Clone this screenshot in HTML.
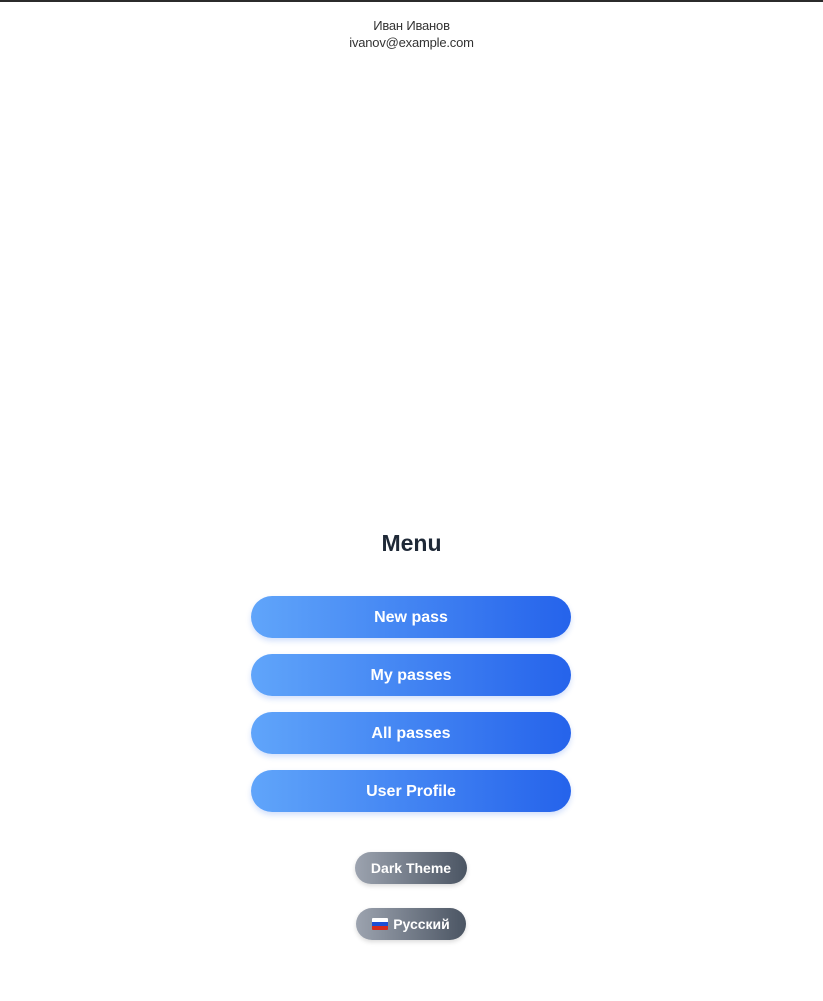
<!DOCTYPE html>
<html><head><meta charset="utf-8"><style>
body{margin:0;width:823px;height:1001px;background:#fff;font-family:"Liberation Sans",sans-serif;position:relative;overflow:hidden}
.top{position:absolute;left:0;top:0;width:823px;height:2px;background:#2b2b2b}
.hdr{position:absolute;top:17px;left:0;width:823px;text-align:center;font-size:13px;line-height:17px;color:#333;font-family:"Liberation Sans",sans-serif;letter-spacing:-0.2px}
h1{position:absolute;top:528px;left:0;width:823px;margin:0;text-align:center;font-size:23px;line-height:30px;color:#1f2937;font-weight:bold;font-family:"Liberation Sans",sans-serif}
.b{position:absolute;left:251px;width:320px;height:42px;border-radius:21px;background:linear-gradient(90deg,#60a5fa,#2563eb);color:#fff;font:bold 16px/44px "Liberation Sans",sans-serif;text-align:center;box-shadow:0 3px 6px rgba(37,99,235,.2)}
.s{position:absolute;height:32px;border-radius:16px;background:linear-gradient(90deg,#9ca3af,#4b5563);color:#fff;font:bold 14px/32px "Liberation Sans",sans-serif;text-align:center;box-shadow:0 2px 5px rgba(0,0,0,.15)}
</style></head><body>
<div class="top"></div>
<div class="hdr">Иван Иванов<br>ivanov@example.com</div>
<h1>Menu</h1>
<div class="b" style="top:596px">New pass</div>
<div class="b" style="top:654px">My passes</div>
<div class="b" style="top:712px">All passes</div>
<div class="b" style="top:770px">User Profile</div>
<div class="s" style="left:355px;width:112px;top:852px">Dark Theme</div>
<div class="s" style="left:356px;width:110px;top:908px"><span style="display:inline-block;width:16px;height:12px;vertical-align:-1px;background:linear-gradient(#fff 0 33%,#1c4fd6 33% 66%,#d52b1e 66%);border-radius:1px;margin-right:5px"></span>Русский</div>
</body></html>
